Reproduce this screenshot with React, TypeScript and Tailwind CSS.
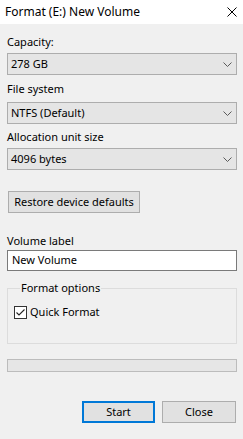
import { ReactNode } from "react";

const font = { fontFamily: '"Noto Sans", "Segoe UI", sans-serif' };

function Chevron() {
  return (
    <svg width="9" height="5" viewBox="0 0 9 5" className="shrink-0">
      <polyline
        points="0.5,0.5 4.5,4.5 8.5,0.5"
        fill="none"
        stroke="#5a5a5a"
        strokeWidth="1"
      />
    </svg>
  );
}

function Combo({ value }: { value: string }) {
  return (
    <div className="flex h-[22px] items-center justify-between border border-[#adadad] bg-[#e5e5e5] pl-[3px] pr-[4px]">
      <span>{value}</span>
      <Chevron />
    </div>
  );
}

function Label({ children, mt }: { children: ReactNode; mt: string }) {
  return <div className={`h-[16px] leading-[16px] ${mt}`}>{children}</div>;
}

function Button({ children, focused }: { children: ReactNode; focused?: boolean }) {
  return (
    <button
      className={
        focused
          ? "h-[22px] w-[73px] border-2 border-[#0078d7] bg-[#e1e1e1] leading-[16px]"
          : "h-[22px] w-[74px] border border-[#adadad] bg-[#e1e1e1] leading-[16px]"
      }
    >
      {children}
    </button>
  );
}

export default function App() {
  return (
    <div
      className="flex h-[439px] w-[243px] flex-col whitespace-nowrap bg-white text-[11px] text-black"
      style={font}
    >
      <div className="flex h-[24px] shrink-0 items-center justify-between bg-white pl-[5px] pr-[6px]">
        <span className="text-[12px] leading-[16px]">Format (E:) New Volume</span>
        <svg width="10" height="10" viewBox="0 0 10 10">
          <path d="M0.5 0.5 L9.5 9.5 M9.5 0.5 L0.5 9.5" stroke="#000" strokeWidth="1" />
        </svg>
      </div>

      <div className="flex flex-1 flex-col bg-[#f0f0f0] pl-[7px] pr-[6px]">
        <Label mt="mt-[10px]">Capacity:</Label>
        <div className="mt-[3px]">
          <Combo value="278 GB" />
        </div>

        <Label mt="mt-[6px]">File system</Label>
        <div className="mt-[5px]">
          <Combo value="NTFS (Default)" />
        </div>

        <Label mt="mt-[5px]">Allocation unit size</Label>
        <div className="mt-[3px]">
          <Combo value="4096 bytes" />
        </div>

        <button className="ml-[1px] mt-[21px] h-[22px] w-[132px] border border-[#adadad] bg-[#e1e1e1] leading-[16px]">
          Restore device defaults
        </button>

        <Label mt="mt-[20px]">Volume label</Label>
        <div className="mt-[1px] flex h-[21px] items-center border border-[#7a7a7a] bg-white pl-[4px]">
          New Volume
        </div>

        <fieldset className="mt-[9px] border border-[#dcdcdc] pb-[23px] pl-[6px]">
          <legend className="ml-[6px] px-[1px] leading-[16px]">Format options</legend>
          <div className="mt-[8px] flex h-[16px] items-center gap-[3px]">
            <svg width="13" height="13" viewBox="0 0 13 13">
              <rect x="0.5" y="0.5" width="12" height="12" fill="#fff" stroke="#333" />
              <polyline
                points="2.5,6.5 5,9 10.5,3.5"
                fill="none"
                stroke="#222"
                strokeWidth="1.1"
              />
            </svg>
            <span>Quick Format</span>
          </div>
        </fieldset>

        <div className="mt-[15px] h-[13px] border border-[#bcbcbc] bg-[#e6e6e6]" />

        <div className="mr-[1px] mt-[29px] flex justify-end gap-[7px]">
          <Button focused>Start</Button>
          <Button>Close</Button>
        </div>
      </div>
    </div>
  );
}
